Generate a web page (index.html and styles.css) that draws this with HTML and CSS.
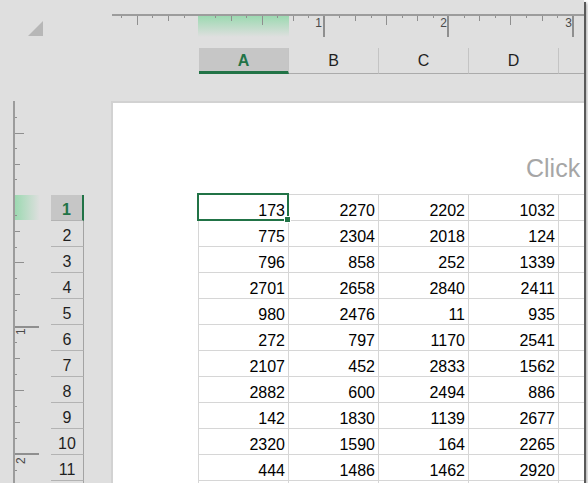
FILE: index.html
```html
<!DOCTYPE html>
<html lang="en">
<head>
    <meta charset="UTF-8">
    <title>Page Layout</title>
    <link rel="stylesheet" href="styles.css">
</head>
<body>
<div class="frame">
    <div class="corner"><div class="select-all"></div></div>

    <div class="top">
        <svg class="hruler" width="473" height="48" viewBox="111 0 473 48">
            <defs>
                <linearGradient id="hsel" x1="0" y1="0" x2="0" y2="1">
                    <stop offset="0" stop-color="#9cd9b1"/>
                    <stop offset="1" stop-color="#dfdfdf"/>
                </linearGradient>
            </defs>
            <rect x="198" y="16" width="91" height="21" fill="url(#hsel)"/>
            <rect x="112" y="14" width="472" height="2" fill="#9c9c9c"/>
            <path stroke="#8f8f8f" stroke-width="1" d="M121.5 16v2M137.5 16v9M152.5 16v2M168.5 16v5M184.5 16v2M215.5 16v2M231.5 16v5M246.5 16v2M262.5 16v9M277.5 16v2M293.5 16v5M308.5 16v2M339.5 16v2M355.5 16v5M371.5 16v2M386.5 16v9M402.5 16v2M417.5 16v5M433.5 16v2M464.5 16v2M479.5 16v5M495.5 16v2M510.5 16v9M526.5 16v2M542.5 16v5M557.5 16v2"/>
            <path stroke="#8f8f8f" stroke-width="2" d="M324 16v21M448 16v21M573 16v21"/>
            <g class="rnum">
                <text x="322" y="27" text-anchor="end">1</text>
                <text x="447" y="27" text-anchor="end">2</text>
                <text x="572" y="27" text-anchor="end">3</text>
            </g>
        </svg>
        <div class="col-heads">
            <div class="ch sel">A</div>
            <div class="ch">B</div>
            <div class="ch">C</div>
            <div class="ch">D</div>
            <div class="ch"></div>
        </div>
    </div>

    <div class="side">
        <svg class="vruler" width="51" height="382" viewBox="0 101 51 382">
            <defs>
                <linearGradient id="vsel" x1="0" y1="0" x2="1" y2="0">
                    <stop offset="0" stop-color="#9cd9b1"/>
                    <stop offset="1" stop-color="#dfdfdf"/>
                </linearGradient>
            </defs>
            <rect x="15" y="195" width="25" height="25" fill="url(#vsel)"/>
            <rect x="13" y="101" width="2" height="382" fill="#9c9c9c"/>
            <path stroke="#8f8f8f" stroke-width="1" d="M15 117.5h2M15 133.5h9M15 148.5h2M15 164.5h5M15 179.5h2M15 215.5h2M15 231.5h5M15 247.5h2M15 262.5h9M15 278.5h2M15 294.5h5M15 310.5h2M15 342.5h2M15 358.5h5M15 374.5h2M15 390.5h9M15 406.5h2M15 422.5h5M15 438.5h2M15 470.5h2"/>
            <path stroke="#8f8f8f" stroke-width="2" d="M15 327h24M15 454h24"/>
            <g class="rnum">
                <text transform="translate(25 335) rotate(-90)">1</text>
                <text transform="translate(25 464) rotate(-90)">2</text>
            </g>
        </svg>
        <div class="row-heads">
            <div class="rh sel">1</div>
            <div class="rh">2</div>
            <div class="rh">3</div>
            <div class="rh">4</div>
            <div class="rh">5</div>
            <div class="rh">6</div>
            <div class="rh">7</div>
            <div class="rh">8</div>
            <div class="rh">9</div>
            <div class="rh">10</div>
            <div class="rh">11</div>
            <div class="rh"></div>
        </div>
    </div>

    <div class="page">
        <div class="page-head">Click</div>
        <div class="cells">
            <div class="cell active">173</div><div class="cell">2270</div><div class="cell">2202</div><div class="cell">1032</div><div class="cell"></div>
            <div class="cell">775</div><div class="cell">2304</div><div class="cell">2018</div><div class="cell">124</div><div class="cell"></div>
            <div class="cell">796</div><div class="cell">858</div><div class="cell">252</div><div class="cell">1339</div><div class="cell"></div>
            <div class="cell">2701</div><div class="cell">2658</div><div class="cell">2840</div><div class="cell">2411</div><div class="cell"></div>
            <div class="cell">980</div><div class="cell">2476</div><div class="cell">11</div><div class="cell">935</div><div class="cell"></div>
            <div class="cell">272</div><div class="cell">797</div><div class="cell">1170</div><div class="cell">2541</div><div class="cell"></div>
            <div class="cell">2107</div><div class="cell">452</div><div class="cell">2833</div><div class="cell">1562</div><div class="cell"></div>
            <div class="cell">2882</div><div class="cell">600</div><div class="cell">2494</div><div class="cell">886</div><div class="cell"></div>
            <div class="cell">142</div><div class="cell">1830</div><div class="cell">1139</div><div class="cell">2677</div><div class="cell"></div>
            <div class="cell">2320</div><div class="cell">1590</div><div class="cell">164</div><div class="cell">2265</div><div class="cell"></div>
            <div class="cell">444</div><div class="cell">1486</div><div class="cell">1462</div><div class="cell">2920</div><div class="cell"></div>
            <div class="cell"></div><div class="cell"></div><div class="cell"></div><div class="cell"></div><div class="cell"></div>
        </div>
    </div>
</div>
</body>
</html>
```

FILE: styles.css
```css
body {
    margin: 0;
    background: #fff;
    font-family: "Liberation Sans", Arial, sans-serif;
}

.frame {
    display: grid;
    grid-template-columns: 111px 473px;
    grid-template-rows: 101px 382px;
    width: 584px;
    height: 483px;
    overflow: hidden;
    background: #dfdfdf;
    box-shadow: 2px 2px 0 #5a5a5a, 3px 3px 3px rgba(0, 0, 0, 0.35);
}

.select-all {
    width: 0;
    height: 0;
    margin: 21px 0 0 28px;
    border-left: 15px solid transparent;
    border-bottom: 15px solid #b7b7b7;
}

.top {
    display: flex;
    flex-direction: column;
}

.hruler,
.vruler {
    display: block;
    flex: none;
}

.rnum {
    font-family: "Liberation Sans", Arial, sans-serif;
    font-size: 12px;
    fill: #4a4a4a;
}

.col-heads {
    display: flex;
    margin-left: 88px;
}

.ch {
    flex: none;
    width: 90px;
    height: 26px;
    box-sizing: border-box;
    border-right: 1px solid #c4c4c4;
    border-bottom: 1px solid #ababab;
    text-align: center;
    font-size: 16px;
    line-height: 25px;
    color: #1f1f1f;
}

.ch.sel {
    background: #c6c6c6;
    border-bottom: 3px solid #217346;
    color: #217346;
    font-weight: bold;
}

.side {
    display: flex;
}

.row-heads {
    width: 33px;
    padding-top: 94px;
}

.rh {
    height: 26px;
    box-sizing: border-box;
    padding-top: 4px;
    border-right: 1px solid #a3a3a3;
    border-bottom: 1px solid #b3b3b3;
    text-align: center;
    font-size: 16px;
    line-height: 21px;
    color: #1f1f1f;
}

.rh.sel {
    background: #c6c6c6;
    border-right: 2px solid #217346;
    color: #217346;
    font-weight: bold;
}

.page {
    border-top: 2px solid #d2d2d2;
    border-left: 2px solid #d2d2d2;
    background: #fff;
    overflow: hidden;
}

.page-head {
    height: 91px;
    box-sizing: border-box;
    padding: 50px 0 0 413px;
    font-size: 25px;
    line-height: 30px;
    color: #a6a6a6;
    white-space: nowrap;
}

.cells {
    display: grid;
    grid-template-columns: repeat(5, 90px);
    grid-auto-rows: 26px;
    width: max-content;
    margin-left: 85px;
    border-top: 1px solid #d6d6d6;
    border-left: 1px solid #d6d6d6;
}

.cell {
    position: relative;
    box-sizing: border-box;
    padding: 6px 3px 0 0;
    border-right: 1px solid #d6d6d6;
    border-bottom: 1px solid #d6d6d6;
    text-align: right;
    font-size: 16px;
    line-height: 19px;
    color: #000;
}

.cell.active::after {
    content: "";
    position: absolute;
    left: -2px;
    top: -2px;
    right: -1px;
    bottom: -1px;
    border: 2px solid #217346;
}

.cell.active::before {
    content: "";
    position: absolute;
    right: -3px;
    bottom: -3px;
    width: 5px;
    height: 5px;
    border: 1px solid #fff;
    background: #217346;
    z-index: 1;
}
```
